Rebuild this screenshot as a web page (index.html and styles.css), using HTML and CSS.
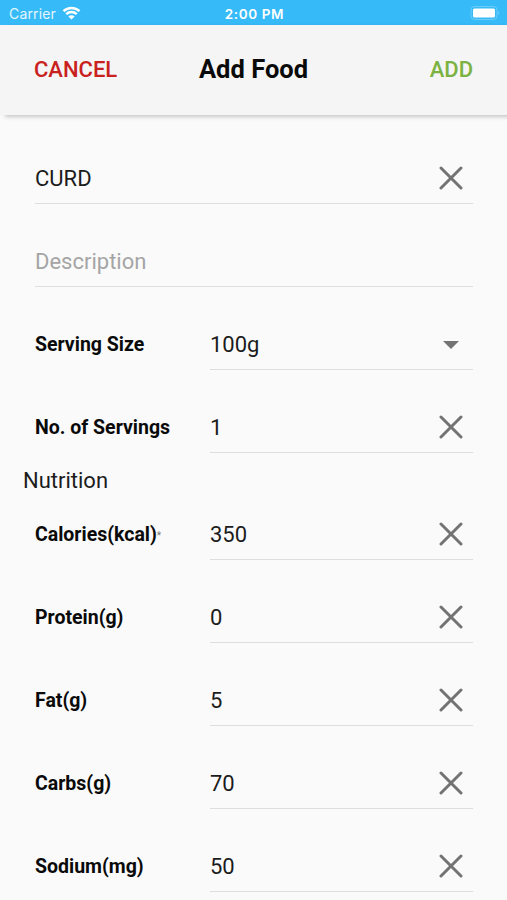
FILE: index.html
```html
<!DOCTYPE html>
<html lang="en">
<head>
    <meta charset="UTF-8">
    <meta name="viewport" content="width=device-width, initial-scale=1.0">
    <title>Add Food</title>
    <link rel="stylesheet" href="styles.css">
</head>
<body>
    <svg width="0" height="0" class="defs">
        <symbol id="clear" viewBox="0 0 24 24">
            <path d="M2 2L22 22M22 2L2 22" fill="none" stroke="#737373" stroke-width="3" stroke-linecap="round"/>
        </symbol>
    </svg>

    <div class="status-bar">
        <div class="carrier">
            <span>Carrier</span>
            <svg class="wifi" viewBox="0 0 18 14">
                <path d="M1 5.2a11.4 11.4 0 0 1 16 0M3.8 8.2a7.4 7.4 0 0 1 10.4 0" fill="none" stroke="#fff" stroke-width="2.5"/>
                <path d="M9 13.6L5.9 10.5a4.4 4.4 0 0 1 6.2 0z" fill="#fff"/>
            </svg>
        </div>
        <span class="time">2:00 PM</span>
        <svg class="battery" viewBox="0 0 30 14">
            <rect x="1" y="0.5" width="26" height="13" rx="3.5" fill="none" stroke="#6ccbfb"/>
            <rect x="3" y="2.5" width="22" height="9" rx="1.5" fill="#fff"/>
            <path d="M28.3 5q1.8 2 0 4z" fill="#7fd0fb"/>
        </svg>
    </div>

    <header class="header">
        <button class="cancel">CANCEL</button>
        <h1>Add Food</h1>
        <button class="add">ADD</button>
    </header>

    <main class="form">
        <div class="row">
            <div class="field"><span class="value">CURD</span><svg class="clear"><use href="#clear"/></svg></div>
        </div>
        <div class="row">
            <div class="field"><span class="value placeholder">Description</span></div>
        </div>
        <div class="row">
            <label>Serving Size</label>
            <div class="field"><span class="value">100g</span><span class="arrow"></span></div>
        </div>
        <div class="row">
            <label>No. of Servings</label>
            <div class="field"><span class="value">1</span><svg class="clear"><use href="#clear"/></svg></div>
        </div>
        <h2>Nutrition</h2>
        <div class="row">
            <label>Calories(kcal)<sup>*</sup></label>
            <div class="field"><span class="value">350</span><svg class="clear"><use href="#clear"/></svg></div>
        </div>
        <div class="row">
            <label>Protein(g)</label>
            <div class="field"><span class="value">0</span><svg class="clear"><use href="#clear"/></svg></div>
        </div>
        <div class="row">
            <label>Fat(g)</label>
            <div class="field"><span class="value">5</span><svg class="clear"><use href="#clear"/></svg></div>
        </div>
        <div class="row">
            <label>Carbs(g)</label>
            <div class="field"><span class="value">70</span><svg class="clear"><use href="#clear"/></svg></div>
        </div>
        <div class="row">
            <label>Sodium(mg)</label>
            <div class="field"><span class="value">50</span><svg class="clear"><use href="#clear"/></svg></div>
        </div>
    </main>
</body>
</html>
```
FILE: styles.css
```css
* {
    margin: 0;
    padding: 0;
    box-sizing: border-box;
}
body {
    height: 900px;
    overflow: hidden;
    background: #fafafa;
    color: #1c1c1c;
    font-family: Roboto, sans-serif;
}
.defs {
    display: none;
}
.status-bar {
    display: grid;
    grid-template-columns: 1fr auto 1fr;
    align-items: center;
    height: 25px;
    padding: 2px 7px 0 9px;
    background: #36bbf8;
    color: #fff;
    font-family: Inter, sans-serif;
    font-size: 14px;
}
.carrier {
    display: flex;
    align-items: center;
    gap: 6px;
    color: #e4f6ff;
    letter-spacing: 0.15px;
}
.wifi {
    width: 19px;
    height: 14px;
    margin-top: -2px;
}
.time {
    font-size: 13.5px;
    font-weight: 600;
    letter-spacing: 0.6px;
}
.battery {
    width: 30px;
    height: 14px;
    margin-top: -1px;
    justify-self: end;
}
.header {
    display: grid;
    grid-template-columns: 1fr auto 1fr;
    align-items: center;
    height: 90px;
    padding: 0 34px 2px 34px;
    background: #f5f5f5;
    box-shadow: 5px 2px 4px rgba(0,0,0,0.2);
}
.header h1 {
    color: #0a0a0a;
    font-size: 25.5px;
    font-weight: 700;
}
button {
    border: none;
    background: none;
    font-family: inherit;
    font-size: 22px;
    font-weight: 500;
}
.cancel {
    justify-self: start;
    color: #c9211e;
}
.add {
    justify-self: end;
    color: #7bb241;
}
.form {
    padding: 37px 34px 0 35px;
}
.row {
    display: flex;
    height: 52px;
    margin-bottom: 31px;
}
label {
    width: 175px;
    line-height: 54px;
    color: #0a0a0a;
    font-size: 19.5px;
    font-weight: 700;
    white-space: nowrap;
}
sup {
    color: #777;
    font-size: 10px;
    font-weight: 400;
    line-height: 0;
    vertical-align: 2px;
}
.field {
    flex: 1;
    display: flex;
    align-items: center;
    justify-content: space-between;
    border-bottom: 1px solid #dedede;
}
.value {
    padding-top: 2px;
    font-size: 22px;
}
.placeholder {
    color: #a5a5a5;
}
.clear {
    width: 24px;
    height: 24px;
    margin: 1px 10.5px 0 0;
}
.arrow {
    margin: 2px 14px 0 0;
    border: 8px solid transparent;
    border-top-color: #737373;
    border-bottom: 0;
}
h2 {
    height: 24px;
    margin: -15px 0 15px -12px;
    font-size: 22px;
    font-weight: 400;
    line-height: 24px;
}
```
